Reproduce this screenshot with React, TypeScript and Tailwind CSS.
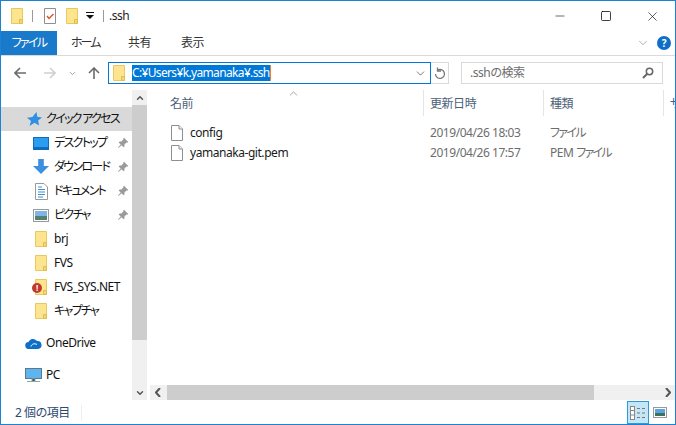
import React from 'react';
import { ChevronDown, ChevronUp, Minus, Square, X } from 'lucide-react';

const FONT = 'font-["Noto_Sans","Noto_Sans_CJK_JP",sans-serif] [font-feature-settings:"palt"] tracking-[-0.45px]';

const FolderIcon = () => (
  <svg width="14" height="18" viewBox="0 0 14 18" className="shrink-0">
    <path d="M1.500 1.500h11v15h-11z" fill="#fde58f" stroke="#e8c95f" />
    <path d="M9.500 16.500v-4h3v4z" fill="#f6d66f" stroke="#e0bd50" />
  </svg>
);

const FileIcon = () => (
  <svg width="14" height="18" viewBox="0 0 14 18" className="shrink-0">
    <path d="M1.500 1.500h7.500l3.500 3.500v11.500h-11z" fill="#fff" stroke="#8f8f8f" />
    <path d="M9 1.500v3.500h3.500" fill="#eee" stroke="#8f8f8f" />
  </svg>
);

const Pin = () => (
  <svg width="12" height="12" viewBox="0 0 12 12" className="shrink-0">
    <path d="M7 .8l4.200 4.200-1 .8-.8-.3-2 2 .1 1.800-.9.9-2-2L1.400 11 1 10.600l2.700-3.200-2-2 .9-.9 1.800.1 2-2-.3-.8z" fill="#9a9a9a" />
  </svg>
);

const Desktop = () => (
  <svg width="16" height="13" viewBox="0 0 16 13">
    <rect x="0.500" y="0.500" width="15" height="12" fill="#2a9df0" stroke="#0f6cbd" />
    <rect x="1" y="10" width="14" height="2.500" fill="#0f6cbd" />
  </svg>
);

const Download = () => (
  <svg width="16" height="16" viewBox="0 0 17 17">
    <path d="M5.500 0h6v7.500H17L8.500 16 0 7.500h5.500z" fill="#3f8fe0" />
  </svg>
);

const DocIcon = () => (
  <svg width="13" height="17" viewBox="0 0 13 17">
    <path d="M.5.500h8.500l3.500 3.500v12.500H.5z" fill="#fff" stroke="#9a9a9a" />
    <path d="M3 4h4M3 6.500h7M3 9h7M3 11.500h7M3 14h5" stroke="#3d8fcf" strokeWidth="1" />
  </svg>
);

const PictureIcon = () => (
  <svg width="16" height="13" viewBox="0 0 16 13">
    <rect x=".5" y=".5" width="15" height="12" fill="#fff" stroke="#9a9a9a" />
    <rect x="2" y="2" width="12" height="5" fill="#7fb6e6" />
    <rect x="2" y="7" width="12" height="4" fill="#56806f" />
  </svg>
);

const Star = () => (
  <svg width="15" height="14" viewBox="0 0 15 14">
    <path d="M9.500 0l.8 4.800L15 5.500l-3.800 3 .8 5-4.500-2.700L2.500 14 4 9 0 5.700l5.400-.6z" fill="#2f8fe0" />
  </svg>
);

const NavRow = ({ icon, label, pin, active, kana }: { icon: React.ReactNode; label: string; pin?: boolean; active?: boolean; kana?: boolean }) => (
  <div className={`flex h-6 shrink-0 items-center ${active ? 'bg-[#d9d9d9] pl-[26px]' : 'pl-[32px]'}`}>
    <div className={`flex items-center justify-center ${active ? 'mr-[4px] w-[15px]' : 'mr-[5px] w-[16px]'}`}>{icon}</div>
    <span className={`flex-1 whitespace-nowrap text-[12px] text-[#111] ${kana ? 'tracking-[-1.7px]' : ''}`}>{label}</span>
    {pin && <div className="mr-[3px]"><Pin /></div>}
  </div>
);

const FileRow = ({ name, date, type }: { name: string; date: string; type: React.ReactNode }) => (
  <div className="flex h-5 items-center pl-[20px] text-[12px]">
    <div className="flex w-[260px] items-center gap-[6px] text-[#1a1a1a]">
      <FileIcon />
      {name}
    </div>
    <div className="w-[120px] text-[#6d6d6d]">{date}</div>
    <div className="text-[#6d6d6d]">{type}</div>
  </div>
);

export default function App() {
  return (
    <div className={`${FONT} flex h-[425px] w-[676px] flex-col overflow-hidden border border-[#1a83d4] bg-white`}>
      {/* title bar */}
      <div className="flex h-[30px] shrink-0 items-center pl-[9px]">
        <FolderIcon />
        <div className="ml-[8px] h-3 w-px bg-[#9a9a9a]" />
        <svg width="14" height="18" viewBox="0 0 14 18" className="ml-[10px]">
          <path d="M1.500 1.500h11v15h-11z" fill="#fff" stroke="#8f8f8f" />
          <path d="M4 9l2 2.500L10.500 7" fill="none" stroke="#e2542b" strokeWidth="1.500" />
        </svg>
        <div className="ml-[8px]"><FolderIcon /></div>
        <svg width="9" height="8" viewBox="0 0 9 8" className="ml-[7px]">
          <path d="M0 0h8v1H0zM0 3h8L4 7z" fill="#111" />
        </svg>
        <div className="ml-[8px] h-3 w-px bg-[#9a9a9a]" />
        <span className="ml-[5px] text-[12px] text-[#222]">.ssh</span>
        <div className="ml-auto flex items-center">
          <div className="flex w-[46px] justify-center"><Minus size={14} strokeWidth={1} className="text-black" /></div>
          <div className="flex w-[46px] justify-center"><Square size={12} strokeWidth={1.500} className="text-black" /></div>
          <div className="flex w-[46px] justify-center"><X size={15} strokeWidth={1} className="text-black" /></div>
        </div>
      </div>

      {/* ribbon tabs */}
      <div className="flex h-[24px] shrink-0 items-center text-[12px] text-[#333]">
        <div className="flex h-full w-[56px] items-center justify-center bg-[#1979ca] tracking-[-1.7px] text-white">ファイル</div>
        <span className="ml-[14px] w-[57px] tracking-[-2px]">ホーム</span>
        <span className="w-[53px]">共有</span>
        <span>表示</span>
        <ChevronDown size={14} strokeWidth={1} className="ml-auto mr-[7px] text-[#777]" />
        <div className="mr-[4px] flex h-[14px] w-[14px] items-center justify-center rounded-full bg-[#0f6fc6] text-[10px] font-bold text-white">?</div>
      </div>

      {/* address row */}
      <div className="flex h-[35px] shrink-0 items-center border-t border-[#dadada] pl-[13px]">
        <svg width="12" height="12" viewBox="0 0 12 12"><path d="M6 1L1 6l5 5M1 6h11" fill="none" stroke="#6b6b6b" strokeWidth="1.600" /></svg>
        <svg width="12" height="12" viewBox="0 0 12 12" className="ml-[18px]"><path d="M6 1l5 5-5 5M11 6H0" fill="none" stroke="#d0d0d0" strokeWidth="1.600" /></svg>
        <ChevronDown size={9} strokeWidth={2} className="ml-[12px] text-[#8a8a8a]" />
        <svg width="12" height="12" viewBox="0 0 12 12" className="ml-[11px]"><path d="M1 6l5-5 5 5M6 1v11" fill="none" stroke="#6b6b6b" strokeWidth="1.600" /></svg>
        <div className="ml-[8px] flex h-[22px] w-[323px] items-center border border-[#0078d7] pl-[3px]">
          <FolderIcon />
          <span className="ml-[6px] border-r border-[#f08030] bg-[#0078d7] text-[12px] leading-[16px] tracking-[-0.65px] text-white">C:¥Users¥k.yamanaka¥.ssh</span>
          <ChevronDown size={13} strokeWidth={1.200} className="ml-auto mr-[3px] text-[#333]" />
        </div>
        <div className="flex h-[22px] w-[18px] items-center justify-center border-y border-r border-[#d9d9d9]">
          <svg width="12" height="13" viewBox="0 0 12 13"><path d="M3.500 3.200A4.500 4.500 0 1 1 1.500 7M3.500.5v3.500H7" fill="none" stroke="#777" strokeWidth="1.300" /></svg>
        </div>
        <div className="ml-[12px] flex h-[22px] w-[202px] items-center justify-between border border-[#d9d9d9] pl-[8px] pr-[8px] text-[12px] text-[#6d6d6d]">
          .sshの検索
          <svg width="12" height="12" viewBox="0 0 12 12"><circle cx="7.500" cy="4.500" r="3.200" fill="none" stroke="#666" strokeWidth="1.500" /><path d="M5 7l-4 4" stroke="#666" strokeWidth="2" /></svg>
        </div>
      </div>

      {/* main */}
      <div className="flex min-h-0 flex-1">
        {/* nav pane */}
        <div className="flex h-[310px] w-[131px] shrink-0 flex-col overflow-hidden pt-[17px]">
          <NavRow active kana icon={<Star />} label="クイック アクセス" />
          <NavRow pin kana icon={<Desktop />} label="デスクトップ" />
          <NavRow pin kana icon={<Download />} label="ダウンロード" />
          <NavRow pin kana icon={<DocIcon />} label="ドキュメント" />
          <NavRow pin kana icon={<PictureIcon />} label="ピクチャ" />
          <NavRow icon={<FolderIcon />} label="brj" />
          <NavRow icon={<FolderIcon />} label="FVS" />
          <NavRow
            label="FVS_SYS.NET"
            icon={
              <div className="relative flex">
                <FolderIcon />
                <div className="absolute -left-[2px] top-[5px] flex h-[10px] w-[10px] items-center justify-center rounded-full bg-[#c0392b] text-[8px] font-bold leading-none text-white">!</div>
              </div>
            }
          />
          <NavRow kana icon={<FolderIcon />} label="キャプチャ" />
          <div className="mt-[10px] flex h-5 shrink-0 items-center pl-[24px] text-[12px] text-[#111]">
            <svg width="17" height="11" viewBox="0 0 17 11" className="mr-[4px]">
              <path d="M4 11a3.500 3.500 0 0 1-.5-7A5 5 0 0 1 12 3a4 4 0 0 1 1 8z" fill="#0f6fc6" />
              <path d="M6 8.500c.5-2.500 3.500-3.500 6-2" fill="none" stroke="#fff" strokeWidth="1" />
            </svg>
            OneDrive
          </div>
          <div className="mt-[12px] flex h-5 shrink-0 items-center pl-[24px] text-[12px] text-[#111]">
            <svg width="17" height="15" viewBox="0 0 17 15" className="mr-[4px]">
              <rect x=".5" y=".5" width="16" height="10" fill="#5fb4ee" stroke="#5a7a90" />
              <path d="M7 11h3v2H7zM2 13.500h13" stroke="#8fa3b0" />
            </svg>
            PC
          </div>
          <div className="mt-[14px] shrink-0 pl-[33px]"><FolderIcon /></div>
        </div>

        {/* nav scrollbar */}
        <div className="flex h-[310px] w-[15px] shrink-0 flex-col bg-[#f0f0f0]">
          <div className="flex h-[15px] items-center justify-center"><ChevronUp size={10} strokeWidth={3.500} className="text-[#555]" /></div>
          <div className="h-[235px] bg-[#cdcdcd]" />
          <div className="flex-1" />
          <div className="flex h-[15px] items-center justify-center"><ChevronDown size={10} strokeWidth={3.500} className="text-[#555]" /></div>
        </div>
        <div className="w-[3px] shrink-0" />

        {/* file list */}
        <div className="flex h-[310px] min-w-0 flex-1 flex-col overflow-hidden">
          <div className="relative flex h-[26px] shrink-0 text-[12px] text-[#4c607a]">
            <ChevronUp size={13} strokeWidth={1} className="absolute left-[137px] -top-[3px] text-[#555]" />
            <div className="w-[273px] pl-[20px] leading-[27px]">名前</div>
            <div className="w-[120px] border-l border-[#e5e5e5] pl-[6px] leading-[27px]">更新日時</div>
            <div className="w-[120px] border-l border-[#e5e5e5] pl-[6px] leading-[27px]">種類</div>
            <div className="flex-1 overflow-hidden whitespace-nowrap border-l border-[#e5e5e5] pl-[6px] leading-[27px]">サイズ</div>
          </div>
          <div className="flex-1 pt-[7px]">
            <FileRow name="config" date="2019/04/26 18:03" type={<span className="tracking-[-1.7px]">ファイル</span>} />
            <FileRow name="yamanaka-git.pem" date="2019/04/26 17:57" type={<>PEM <span className="tracking-[-1.7px]">ファイル</span></>} />
          </div>
          <div className="flex h-[15px] shrink-0 bg-[#f0f0f0]">
            <div className="flex w-[15px] items-center justify-center"><svg width="6" height="9" viewBox="0 0 6 9"><path d="M5 0L1 4.500 5 9" fill="none" stroke="#555" strokeWidth="2" /></svg></div>
            <div className="ml-[2px] w-[427px] bg-[#cdcdcd]" />
            <div className="ml-auto flex w-[15px] items-center justify-center"><svg width="6" height="9" viewBox="0 0 6 9"><path d="M1 0l4 4.500L1 9" fill="none" stroke="#555" strokeWidth="2" /></svg></div>
          </div>
        </div>
      </div>

      {/* status bar */}
      <div className="flex h-[23px] shrink-0 items-center pl-[14px] text-[12px] text-[#2c4a70]">
        <span className="w-[66px]">2 個の項目</span>
        <div className="h-[16px] w-px bg-[#eee]" />
        <div className="ml-auto flex h-full w-[22px] items-center justify-center border border-[#2c9ad6] bg-[#c5e6f7]">
          <svg width="16" height="14" viewBox="0 0 16 14">
            <rect x=".5" y=".5" width="4" height="13" fill="#fff" stroke="#888" />
            <path d="M1 4.500h3M1 9h3" stroke="#888" />
            <path d="M7 2.500h3M12 2.500h3M7 7h3M12 7h3M7 11.500h3M12 11.500h3" stroke="#777" />
          </svg>
        </div>
        <div className="ml-[4px] mr-[8px]">
          <svg width="14" height="11" viewBox="0 0 14 11">
            <rect x=".5" y=".5" width="13" height="10" fill="#fff" stroke="#999" />
            <rect x="2" y="2" width="10" height="4" fill="#5aa5e0" />
            <rect x="2" y="6" width="10" height="3" fill="#3e6f63" />
          </svg>
        </div>
      </div>
    </div>
  );
}
